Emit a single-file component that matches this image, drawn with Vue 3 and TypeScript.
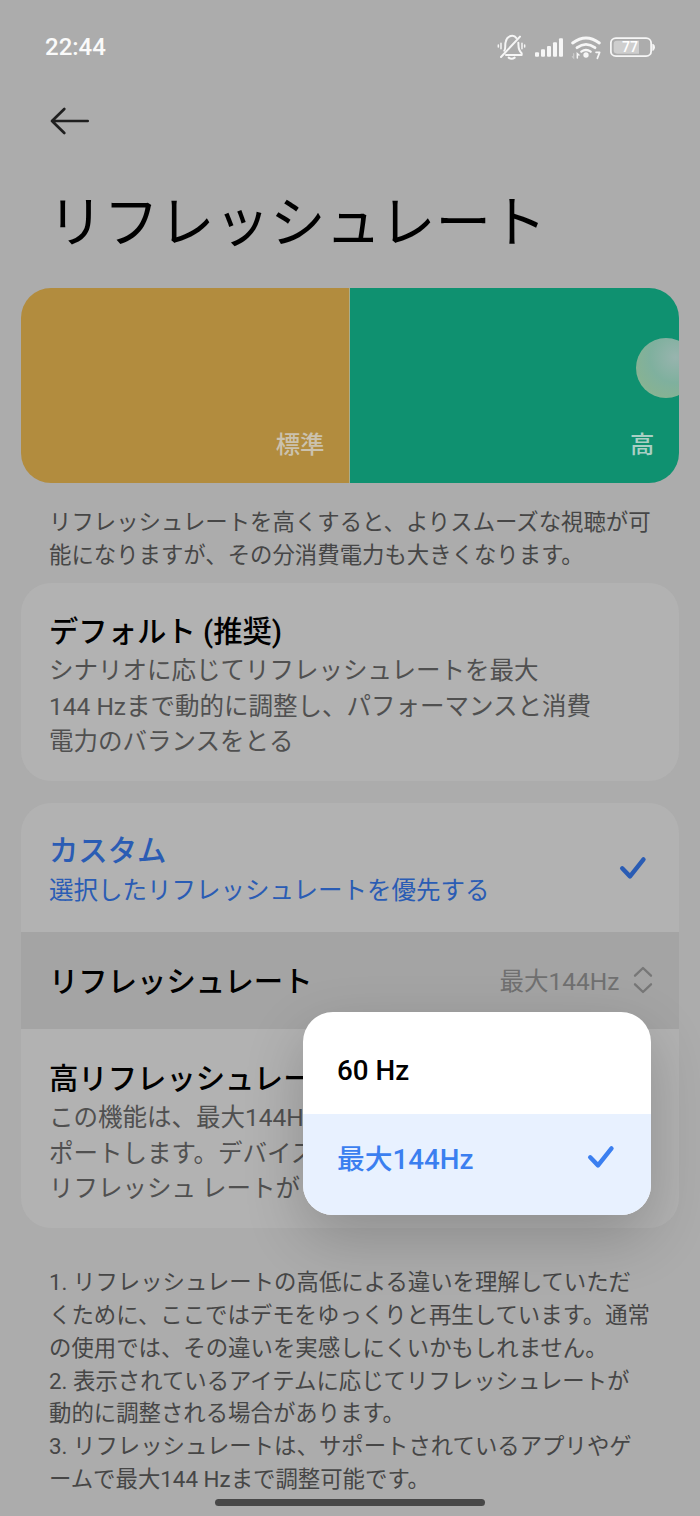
<script setup lang="ts">
interface Option {
  label: string
  selected: boolean
}

const intro: string[] = [
  'リフレッシュレートを高くすると、よりスムーズな視聴が可',
  '能になりますが、その分消費電力も大きくなります。',
]

const defaultSummary: string[] = [
  'シナリオに応じてリフレッシュレートを最大',
  '144 Hzまで動的に調整し、パフォーマンスと消費',
  '電力のバランスをとる',
]

const highSummary: string[] = [
  'この機能は、最大144Hz',
  'ポートします。デバイス',
  'リフレッシュ レートが',
]

const notes: string[] = [
  '1. リフレッシュレートの高低による違いを理解していただ',
  'くために、ここではデモをゆっくりと再生しています。通常',
  'の使用では、その違いを実感しにくいかもしれません。',
  '2. 表示されているアイテムに応じてリフレッシュレートが',
  '動的に調整される場合があります。',
  '3. リフレッシュレートは、サポートされているアプリやゲ',
  'ームで最大144 Hzまで調整可能です。',
]

const options: Option[] = [
  { label: '60 Hz', selected: false },
  { label: '最大144Hz', selected: true },
]
</script>

<template>
  <div class="screen">
    <header class="status">
      <span class="clock">22:44</span>
      <div class="indicators">
        <svg class="bell" viewBox="52 40 86 80" fill="none" stroke="#f6f6f6" stroke-width="6" stroke-linecap="round" stroke-linejoin="round">
          <path d="M74 90 C79 84 75 74 78 64 C82 43 103 41 110 52" />
          <path d="M116 66 C117 76 114 88 126 98 V103 H79" />
          <path d="M64 109 L121 48" />
          <path d="M87 111 Q96 118 105 111" />
          <path d="M64 68 V84 M56 73 V79 M127 68 V84 M135 73 V79" stroke-width="4.5" />
        </svg>
        <svg class="signal" viewBox="165 40 85 80" fill="#f6f6f6">
          <rect x="165" y="95" width="12" height="13" rx="3" />
          <rect x="183" y="86" width="12" height="22" rx="3" />
          <rect x="201" y="76" width="12" height="32" rx="3" />
          <rect x="219" y="65" width="12" height="43" rx="3" />
          <rect x="237" y="53" width="12" height="55" rx="3" />
        </svg>
        <svg class="wifi" viewBox="273 40 92 80" fill="none" stroke="#f6f6f6" stroke-width="8.5" stroke-linecap="round">
          <path d="M278 67 Q318 37 358 67" />
          <path d="M291 81 Q318 61 345 81" />
          <path d="M304 93 Q318 83 332 93" stroke-width="7" />
          <circle cx="318" cy="103" r="8" fill="#f6f6f6" stroke="none" />
          <path d="M281 99 V112 L277 108" stroke="#cccccc" stroke-width="3.5" />
          <path d="M292 112 V99 L297 103" stroke-width="4.5" />
          <path d="M348 95 H359 L352 113" stroke-width="5" stroke-linejoin="round" />
        </svg>
        <svg class="battery" viewBox="390 40 136 80">
          <rect x="392.5" y="52.5" width="121" height="54" rx="15" fill="none" stroke="#f6f6f6" stroke-width="5.5" />
          <path d="M411 60 H477 V99 H411 Q401 99 401 89 V70 Q401 60 411 60Z" fill="#cecece" />
          <path d="M517 70 H520 Q525 72 525 80 Q525 88 520 90 H517Z" fill="#f6f6f6" />
          <text x="426" y="95" class="charge">77</text>
        </svg>
      </div>
    </header>

    <nav class="nav">
      <svg class="back" viewBox="0 0 40 28" fill="none" stroke="#1f1f1f" stroke-width="2.7" stroke-linecap="round" stroke-linejoin="round">
        <path d="M37.7 14 H2 M14.3 2 L2 14 L14.3 26" />
      </svg>
    </nav>

    <h1 class="heading">リフレッシュレート</h1>

    <section class="demo">
      <div class="half standard"><span>標準</span></div>
      <div class="half high"><span>高</span></div>
      <i class="ball"></i>
    </section>

    <div class="paragraph intro">
      <p v-for="line in intro" :key="line">{{ line }}</p>
    </div>

    <section class="card default-card">
      <h2>デフォルト (推奨)</h2>
      <p v-for="line in defaultSummary" :key="line" class="summary">{{ line }}</p>
    </section>

    <section class="card custom-card">
      <div class="row custom">
        <div>
          <h2>カスタム</h2>
          <p class="summary">選択したリフレッシュレートを優先する</p>
        </div>
        <svg class="tick" viewBox="0 0 28 24" fill="none" stroke="#2a5cb4" stroke-width="4.4" stroke-linecap="round" stroke-linejoin="round">
          <path d="M3.2 12.3 L11 20.4 L24.5 3.4" />
        </svg>
      </div>
      <div class="row rate">
        <h2>リフレッシュレート</h2>
        <div class="picker">
          <span>最大144Hz</span>
          <svg viewBox="0 0 20 28" fill="none" stroke="#777" stroke-width="2.3" stroke-linecap="round" stroke-linejoin="round">
            <path d="M2 9.7 L10 2 L18 9.7 M2 18.3 L10 26 L18 18.3" />
          </svg>
        </div>
      </div>
      <div class="high-rate">
        <h2>高リフレッシュレート</h2>
        <p v-for="line in highSummary" :key="line" class="summary">{{ line }}</p>
      </div>
      <div class="menu">
        <div v-for="option in options" :key="option.label" class="option" :class="{ selected: option.selected }">
          <span>{{ option.label }}</span>
          <svg v-if="option.selected" class="tick" viewBox="0 0 28 24" fill="none" stroke="#3b7ff0" stroke-width="4.4" stroke-linecap="round" stroke-linejoin="round">
            <path d="M3.2 12.3 L11 20.4 L24.5 3.4" />
          </svg>
        </div>
      </div>
    </section>

    <div class="paragraph notes">
      <p v-for="line in notes" :key="line">{{ line }}</p>
    </div>

    <i class="home"></i>
  </div>
</template>

<style>
body {
  margin: 0;
  background: #acacac;
}
</style>

<style scoped>
.screen {
  position: relative;
  width: 700px;
  height: 1516px;
  overflow: hidden;
  box-sizing: border-box;
  background: #acacac;
  color: #000;
  font-family: Roboto, 'Noto Sans CJK JP', sans-serif;
  white-space: nowrap;
}
h1,
h2,
p {
  margin: 0;
}
svg {
  display: block;
}
.status {
  display: flex;
  justify-content: space-between;
  align-items: center;
  height: 94px;
  padding: 0 44.7px 0 45px;
  box-sizing: border-box;
}
.clock {
  color: #fafafa;
  font-size: 24px;
  font-weight: 500;
  line-height: 28px;
}
.indicators {
  display: flex;
}
.indicators svg {
  height: 26.67px;
}
.bell {
  width: 28.67px;
}
.signal {
  width: 28.33px;
  margin-left: 9px;
}
.wifi {
  width: 30.67px;
  margin-left: 7.67px;
}
.battery {
  width: 45.33px;
  margin-left: 8.33px;
}
.charge {
  fill: #fff;
  font-size: 42px;
  font-weight: 500;
}
.nav {
  height: 78px;
  margin-bottom: 9px;
  padding: 12.5px 0 0 49.5px;
  box-sizing: border-box;
}
.back {
  width: 40px;
  height: 28px;
}
.heading {
  height: 104px;
  padding: 3px 0 0 48px;
  font-size: 55.5px;
  font-weight: 400;
  line-height: 80px;
}
.demo {
  position: relative;
  display: flex;
  height: 195px;
  margin: 0 21px;
  border-radius: 30px;
  overflow: hidden;
}
.half {
  display: flex;
  justify-content: flex-end;
  align-items: flex-end;
  padding: 0 24.5px 20px 0;
  box-sizing: border-box;
  font-size: 24.4px;
  font-weight: 500;
  line-height: 36px;
}
.standard {
  width: 329px;
  background: #b28c3e;
  color: #cbc2ae;
  border-right: 1px solid #a9ad8b;
}
.high {
  flex: 1;
  background: #0f9170;
  color: #a9cfc4;
}
.ball {
  position: absolute;
  left: 614.5px;
  top: 50px;
  width: 60px;
  height: 60px;
  border-radius: 50%;
  background: radial-gradient(circle at 66% 32%, #98b4ae 0%, #7fb09e 45%, #86b294 72%, #93bc95 100%);
}
.paragraph {
  padding-left: 49px;
  color: #464646;
  font-size: 22.4px;
  line-height: 32.85px;
}
.intro {
  height: 77px;
  padding-top: 23px;
}
.card {
  margin: 0 21px;
  border-radius: 30px;
  background: #b2b2b2;
  box-sizing: border-box;
}
.card h2 {
  font-size: 29.35px;
  font-weight: 500;
  line-height: 42px;
}
.summary {
  color: #505050;
  font-size: 24.5px;
  line-height: 35.6px;
}
.default-card {
  height: 198px;
  padding: 28px 0 0 28px;
}
.custom-card {
  position: relative;
  height: 425px;
  margin-top: 22px;
}
.row {
  display: flex;
  justify-content: space-between;
  box-sizing: border-box;
  padding-left: 28px;
}
.custom {
  height: 128.5px;
  padding-top: 27px;
  padding-right: 32px;
}
.custom h2,
.custom .summary {
  color: #2a5cb4;
}
.custom .summary {
  padding-top: 1px;
}
.tick {
  width: 28px;
  height: 24px;
}
.custom .tick {
  margin-top: 25.5px;
}
.rate {
  align-items: center;
  height: 97.5px;
  padding-right: 26.5px;
  background: #a4a4a4;
}
.rate h2 {
  padding-top: 4px;
}
.picker {
  display: flex;
  align-items: center;
  gap: 13px;
  color: #707070;
  font-size: 24.5px;
  line-height: 36px;
}
.picker span {
  padding-top: 4px;
}
.picker svg {
  width: 20px;
  height: 28px;
  margin-bottom: 1px;
}
.high-rate {
  padding: 29px 0 0 28px;
}
.menu {
  position: absolute;
  left: 281.5px;
  top: 209px;
  width: 348.5px;
  height: 203px;
  border-radius: 30px;
  overflow: hidden;
  background: #fff;
  box-shadow: 0 22px 60px rgba(0, 0, 0, 0.2);
}
.option {
  display: flex;
  justify-content: space-between;
  align-items: center;
  height: 101.5px;
  padding: 17px 36.5px 0 34.5px;
  box-sizing: border-box;
  font-size: 27.75px;
  font-weight: 500;
  line-height: 40px;
}
.option.selected {
  padding-top: 0;
  padding-bottom: 8px;
  background: #e8f1ff;
  color: #3b7ff0;
}
.option .tick {
  margin-bottom: 6px;
}
.notes {
  padding-top: 38px;
}
.home {
  position: absolute;
  left: 215px;
  top: 1498.5px;
  width: 270px;
  height: 7px;
  border-radius: 4px;
  background: #484848;
}
</style>
